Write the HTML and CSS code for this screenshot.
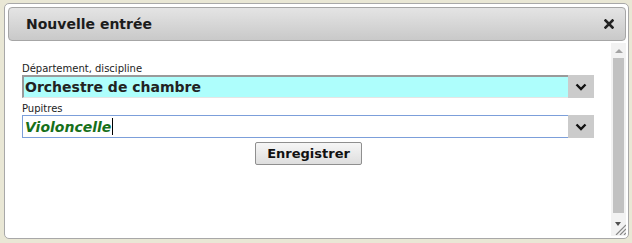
FILE: index.html
```html
<!DOCTYPE html>
<html lang="fr">
<head>
  <meta charset="UTF-8">
  <title>Nouvelle entrée</title>
  <link rel="stylesheet" href="styles.css">
</head>
<body>

<div class="dialog">
  <div class="titlebar">
    <span class="title">Nouvelle entrée</span>
    <span class="close">
      <svg width="10" height="10" viewBox="0 0 10 10"><path d="M1.5 1.5 L8.5 8.5 M8.5 1.5 L1.5 8.5" stroke="#222" stroke-width="2.6" stroke-linecap="square"/></svg>
    </span>
  </div>
  <div class="content">
    <form class="form">
      <label class="lbl">Département, discipline</label>
      <div class="row">
        <div class="field select">Orchestre de chambre</div>
        <span class="arrow"><svg width="12" height="8" viewBox="0 0 12 8"><path d="M1.5 1.5 L6 6 L10.5 1.5" fill="none" stroke="#111" stroke-width="2.4"/></svg></span>
      </div>
      <label class="lbl">Pupitres</label>
      <div class="row">
        <div class="field input"><span class="val">Violoncelle</span><span class="caret"></span></div>
        <span class="arrow"><svg width="12" height="8" viewBox="0 0 12 8"><path d="M1.5 1.5 L6 6 L10.5 1.5" fill="none" stroke="#111" stroke-width="2.4"/></svg></span>
      </div>
      <div class="actions">
        <button type="button" class="btn">Enregistrer</button>
      </div>
    </form>
    <div class="scrollbar">
      <span class="up"></span>
      <span class="thumb"></span>
      <span class="down"></span>
      <svg class="grip" width="11" height="11" viewBox="0 0 11 11"><path d="M1 11 L11 1 M5 11 L11 5 M9 11 L11 9" stroke="#888" stroke-width="1.2"/></svg>
    </div>
  </div>
</div>

</body>
</html>
```

FILE: styles.css
```css
body {
  margin: 0;
  background: #e9e7d5;
  font-family: "DejaVu Sans", Verdana, sans-serif;
  color: #222;
}

.dialog {
  box-sizing: border-box;
  width: 625px;
  height: 236px;
  margin: 3px 0 0 4px;
  padding: 3px 2px 2px 3px;
  background: #fff;
  border: 1px solid #a8a8a8;
  border-radius: 5px;
  display: flex;
  flex-direction: column;
}

.titlebar {
  box-sizing: border-box;
  height: 34px;
  border: 1px solid #a6a6a6;
  border-radius: 4px;
  background: linear-gradient(#e4e4e4, #c9c9c9);
  display: flex;
  align-items: center;
  justify-content: space-between;
  padding: 0 11px 0 17px;
}
.title {
  font-weight: bold;
  font-size: 14px;
  color: #1c1c1c;
}
.close {
  display: flex;
}

.content {
  flex: 1;
  display: flex;
  min-height: 0;
}

.form {
  flex: 1;
  margin: 0;
  padding: 22px 17px 0 14px;
}
.lbl {
  display: block;
  font-size: 10px;
  line-height: 12px;
  color: #222;
}
.row {
  display: flex;
  height: 23px;
  margin-bottom: 5px;
}
.field {
  flex: 1;
  box-sizing: border-box;
  font-weight: bold;
  font-size: 14px;
  display: flex;
  align-items: center;
  padding-left: 2px;
}
.select {
  background: #aefefc;
  border-top: 2px solid #9a9a9a;
  border-left: 2px solid #9a9a9a;
  border-bottom: 1px solid #e6e6e6;
  padding-left: 1px;
}
.input {
  border: 1px solid #7c9fda;
  margin-right: -3px;
}
.val {
  font-style: italic;
  color: #17701a;
}
.caret {
  width: 1px;
  height: 17px;
  background: #000;
  margin-left: 1px;
}
.arrow {
  width: 26px;
  background: #cbcbcb;
  display: flex;
  align-items: center;
  justify-content: center;
  position: relative;
}

.actions {
  display: flex;
  justify-content: center;
  margin-top: -1px;
}
.btn {
  font-family: inherit;
  font-weight: bold;
  font-size: 13px;
  color: #111;
  height: 23px;
  width: 107px;
  padding: 0;
  margin-left: 1px;
  border: 1px solid #8f8f8f;
  border-radius: 2px;
  background: linear-gradient(#f6f6f6, #dedede);
}

.scrollbar {
  width: 15px;
  margin-top: 2px;
  background: #f2f2f2;
  display: flex;
  flex-direction: column;
  align-items: center;
  position: relative;
}
.up {
  margin-top: 6px;
  width: 0;
  height: 0;
  border-left: 4px solid transparent;
  border-right: 4px solid transparent;
  border-bottom: 4px solid #a3a3a3;
}
.thumb {
  margin-top: 5px;
  width: 11px;
  height: 155px;
  background: #c1c1c1;
}
.down {
  margin-top: 9px;
  margin-right: 2px;
  width: 0;
  height: 0;
  border-left: 3px solid transparent;
  border-right: 3px solid transparent;
  border-top: 4px solid #505050;
}
.grip {
  position: absolute;
  right: 0;
  bottom: 1px;
}
```
